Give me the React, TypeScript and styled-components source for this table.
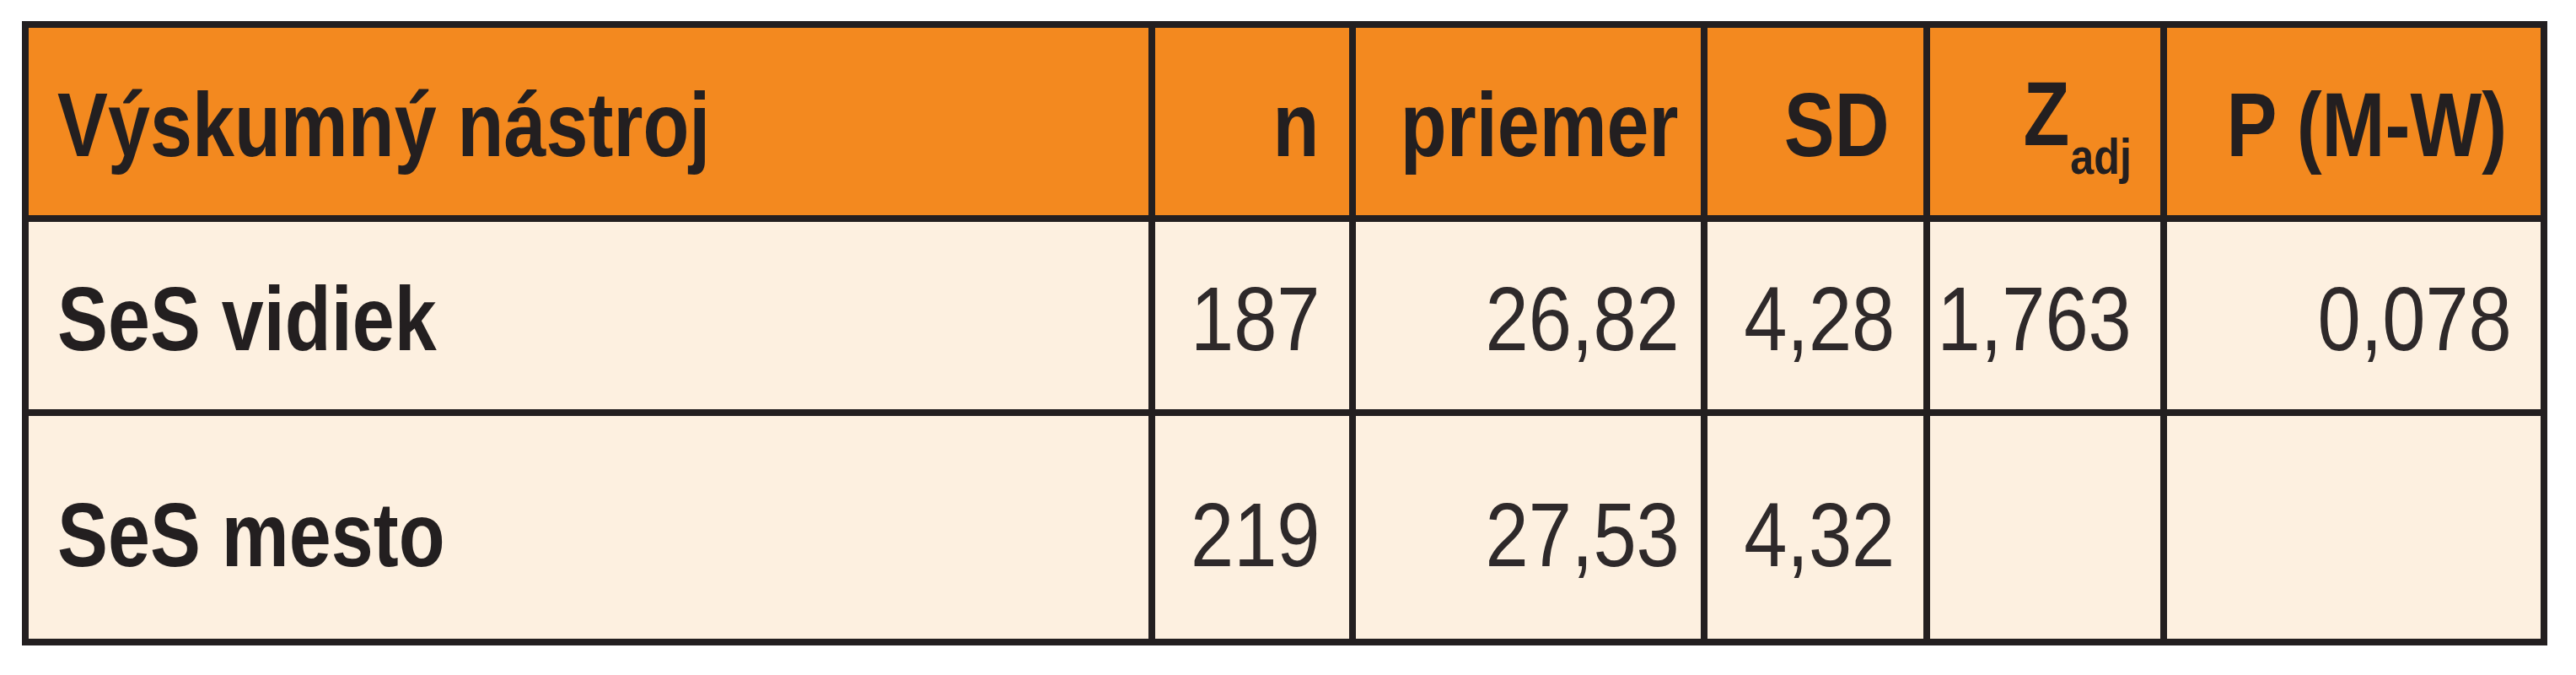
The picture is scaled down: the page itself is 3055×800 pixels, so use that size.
import styled, { createGlobalStyle } from "styled-components";

const GlobalStyle = createGlobalStyle`
  html, body {
    margin: 0;
    padding: 0;
    background: #ffffff;
  }
  body {
    font-family: "Liberation Sans", Arial, sans-serif;
  }
`;

const Page = styled.div`
  padding: 25px 0 0 26px;
`;

const Table = styled.div`
  display: inline-grid;
  grid-template-columns: 1328px 230px 409px 256px 273px 443px;
  grid-template-rows: 222px 222px 264px;
  gap: 8px;
  padding: 8px;
  background: #231f20;
`;

const Cell = styled.div<{ head?: boolean; align?: "left" | "right"; padRight?: number; shift?: number }>`
  display: flex;
  align-items: center;
  justify-content: ${(p) => (p.align === "left" ? "flex-start" : "flex-end")};
  padding: ${(p) => `${p.shift ?? 9}px ${p.padRight ?? 34}px 0 34px`};
  background: ${(p) => (p.head ? "#f3891f" : "#fdf0e0")};
  color: #231f20;
  font-size: 107px;
  line-height: 1;
  white-space: nowrap;
  overflow: visible;
`;

/* the print face is a condensed sans; squeeze Arial metrics to match */
const Text = styled.span<{ bold?: boolean; alignRight?: boolean; squeeze?: number }>`
  display: inline-block;
  font-weight: ${(p) => (p.bold ? 700 : 400)};
  color: ${(p) => (p.bold ? "#231f20" : "#2e292a")};
  transform: scaleX(${(p) => p.squeeze ?? 0.84});
  transform-origin: ${(p) => (p.alignRight ? "right" : "left")} center;
`;

const Sub = styled.sub`
  font-size: 60px;
  font-weight: 700;
  vertical-align: -34px;
  margin-left: 1px;
`;

const headPads = [34, 36, 26, 40, 34, 40];

const rows = [
  { label: "SeS vidiek", values: ["187", "26,82", "4,28", "1,763", "0,078"] },
  { label: "SeS mesto", values: ["219", "27,53", "4,32", "", ""] },
];

export default function App() {
  return (
    <>
      <GlobalStyle />
      <Page>
        <Table>
          <Cell head align="left" padRight={headPads[0]}>
            <Text bold>Výskumný nástroj</Text>
          </Cell>
          <Cell head padRight={headPads[1]}>
            <Text bold alignRight>n</Text>
          </Cell>
          <Cell head padRight={headPads[2]}>
            <Text bold alignRight>priemer</Text>
          </Cell>
          <Cell head padRight={headPads[3]}>
            <Text bold alignRight>SD</Text>
          </Cell>
          <Cell head padRight={headPads[4]}>
            <Text bold alignRight>
              Z<Sub>adj</Sub>
            </Text>
          </Cell>
          <Cell head padRight={headPads[5]}>
            <Text bold alignRight>P (M-W)</Text>
          </Cell>

          {rows.map((row, ri) => {
            const shift = ri === 1 ? 18 : 9;
            return [
              <Cell key={row.label} align="left" shift={shift}>
                <Text bold>{row.label}</Text>
              </Cell>,
              ...row.values.map((v, i) => (
                <Cell key={row.label + i} padRight={i === 1 ? 25 : 34} shift={shift}>
                  <Text alignRight squeeze={0.86}>{v}</Text>
                </Cell>
              )),
            ];
          })}
        </Table>
      </Page>
    </>
  );
}
